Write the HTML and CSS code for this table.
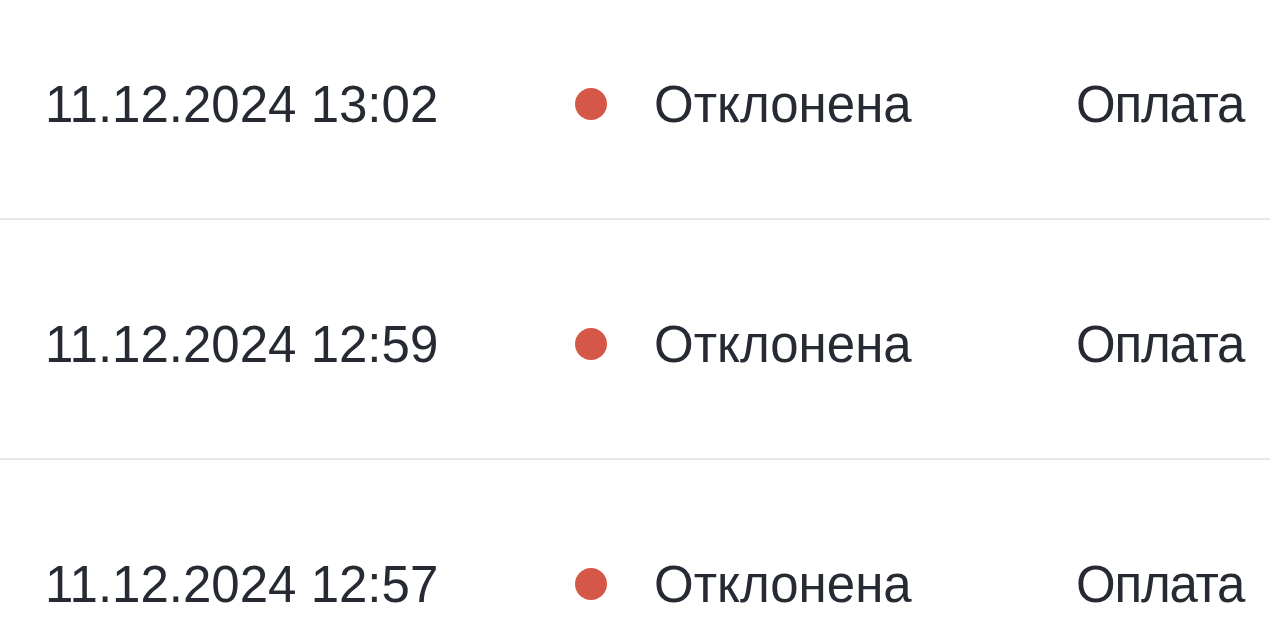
FILE: index.html
```html
<!DOCTYPE html>
<html lang="ru">
<head>
<meta charset="utf-8">
<link rel="stylesheet" href="styles.css">
</head>
<body>
<div class="table">
  <div class="row">
    <div class="date">11.12.2024 13:02</div>
    <div class="status"><span class="dot"></span><span>Отклонена</span></div>
    <div class="type">Оплата</div>
  </div>
  <div class="row">
    <div class="date">11.12.2024 12:59</div>
    <div class="status"><span class="dot"></span><span>Отклонена</span></div>
    <div class="type">Оплата</div>
  </div>
  <div class="row">
    <div class="date">11.12.2024 12:57</div>
    <div class="status"><span class="dot"></span><span>Отклонена</span></div>
    <div class="type">Оплата</div>
  </div>
</div>
</body>
</html>
```
FILE: styles.css
```css
html, body {
  margin: 0;
  padding: 0;
  background: #ffffff;
  overflow: hidden;
}
body {
  font-family: "Liberation Sans", Arial, sans-serif;
  color: #262a33;
  width: 1270px;
  height: 644px;
}
.table {
  margin-top: -20px;
  height: 664px;
  overflow: hidden;
}
.row {
  display: grid;
  grid-template-columns: 530px 501px 1fr;
  align-items: center;
  height: 228px;
  padding-top: 10px;
  padding-left: 45px;
  border-bottom: 2px solid #e6e8eb;
  font-size: 51px;
  white-space: nowrap;
}
.type {
  letter-spacing: -1.2px;
}
.status {
  display: flex;
  align-items: center;
  gap: 47px;
}
.dot {
  width: 32px;
  height: 32px;
  border-radius: 50%;
  background: #d4574a;
  flex: none;
}
```
